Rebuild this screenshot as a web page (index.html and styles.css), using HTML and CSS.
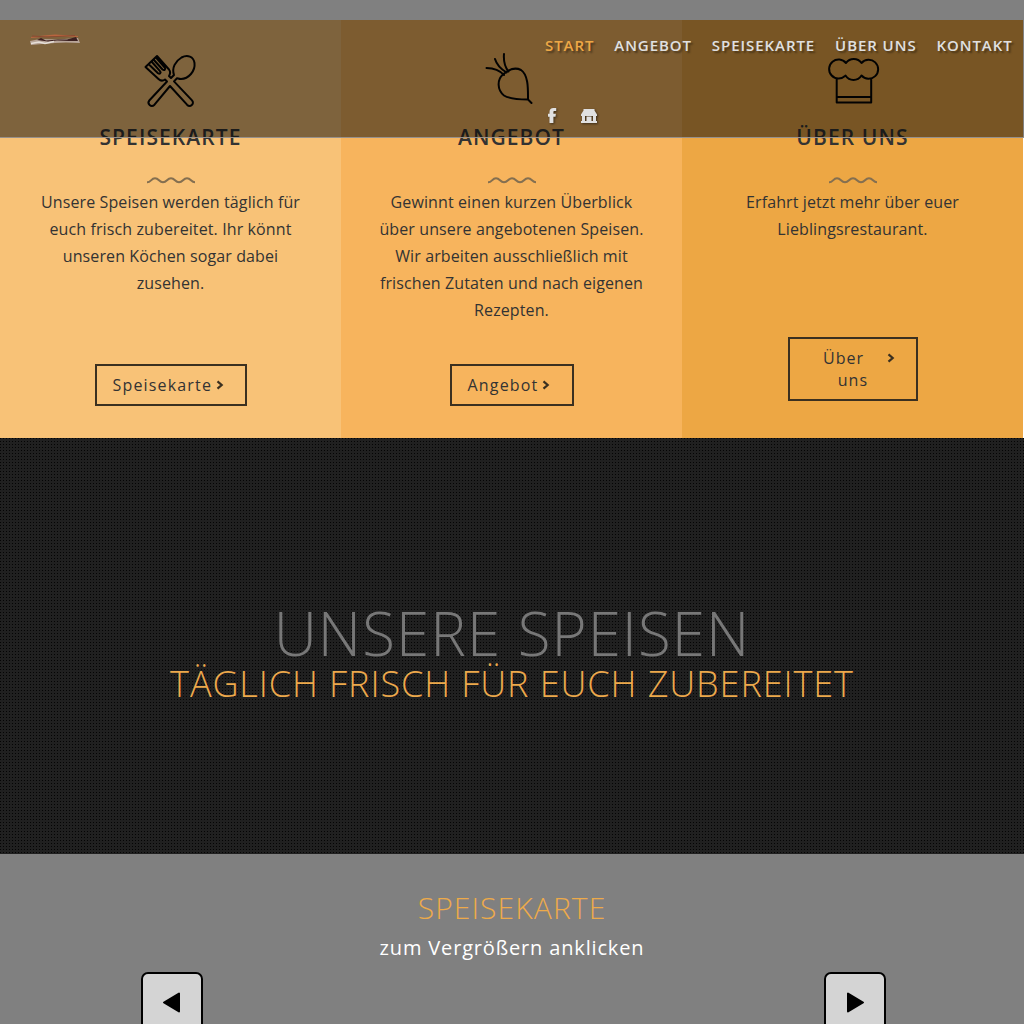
FILE: index.html
```html
<!DOCTYPE html>
<html lang="de">
<head>
<meta charset="utf-8">
<title>Restaurant</title>
<link rel="stylesheet" href="styles.css">
</head>
<body>
<header class="header">
  <a class="logo" href="#"><svg width="50" height="12" viewBox="0 0 50 12"><path d="M1 3.500 14 2.200 25 1.200 48 2.500" fill="none" stroke="#b9653f" stroke-width="1.200"/><path d="M2 2 18 3 45 1.500" fill="none" stroke="#8d4a31"/><path d="M0 7 10 5 28 5.500 48 4 50 9 36 8.500 25 9 12 10 1 11Z" fill="#b9a69a"/><path d="m7 6 4-2 5 2.500 12-1 9 0 9-2.500 2 4-9 0-12-.5-9 1Z" fill="#3c2020"/><path d="m1 9.500 8-1.500 6 1.500 9-2" fill="none" stroke="#e5dfd8" stroke-width="1.500"/></svg></a>
  <nav class="nav">
    <div class="menu"><a class="active" href="#">START</a><a href="#">ANGEBOT</a><a href="#">SPEISEKARTE</a><a href="#">ÜBER UNS</a><a href="#">KONTAKT</a></div>
    <div class="social">
      <a href="#"><svg width="16" height="16" viewBox="0 0 16 16"><path d="M4.500 15V8.700H3V5.800h1.500V4C4.500 1.300 6 0 8.300 0h2.900v3H9.600c-1 0-1.200.5-1.200 1.300v1.500h2.500l-.4 2.900H8.400V15Z"/></svg></a>
      <a href="#"><svg width="16" height="16" viewBox="0 0 16 16"><path fill-rule="evenodd" d="M2.500 1h11v1.500l2.500 4V8h-1v5h1v2H0v-2h1V8H0V6.500l2.500-4ZM4 8v5h1.500V8.500h5V13H12V8Z"/><path d="M6.500 9.500h3V13h-3Z"/></svg></a>
    </div>
  </nav>
</header>
<section class="cards">
  <article class="card light">
    <svg class="icon fork" width="54" height="54" viewBox="0 0 54 54"><path d="m2.500 12.500 11.500-11 12 13.500c1.800 2.300 1.200 4.500 0 6.500l2 2 3-3c-2.500-7 1.500-14 7.500-17.500 6-3 12-1 13 5.500 1 8-6 16-13.500 16-2 0-3-.7-4-.8l-3 3.200 18 19c3 3.400-1.800 7.500-5 4.300L27 31.500 11.500 50.200c-3.300 3.300-8-.8-5-4.500L24 27l-2-2c-2 1.500-4.500 1.400-6.500-.5Zm3-3 9.500 9.200c1.800 1.300 3.500-.5 2-2L8.500 7m2-2 9 10c1.800 1.400 3.500-.3 2.200-2l-8.700-10"/></svg>
    <h3>SPEISEKARTE</h3>
    <svg class="wave" width="48" height="7" viewBox="0 0 48 7"><path d="M0 5.300C4 5.500 4 1.300 8 1.300s4 4 8 4 4-4 8-4 4 4 8 4 4-4 8-4 4 4 8 4"/></svg>
    <p>Unsere Speisen werden täglich für<br>euch frisch zubereitet. Ihr könnt<br>unseren Köchen sogar dabei<br>zusehen.</p>
    <a class="button b1" href="#"><span>Speisekarte</span><svg width="8" height="10" viewBox="0 0 8 10"><path d="m1.500 1.300 4.200 3.700-4.200 3.700"/></svg></a>
  </article>
  <article class="card medium">
    <svg class="icon beet" width="54" height="54" viewBox="0 0 54 54"><path d="M50 46.500c-7 0-17.500 0-24-4C19 37 19 26.500 25 21.500c5.500-5 12-7.500 18-4.500C50.500 22 50 36 50 46.500l3.500 3.500M26 22C21 16.500 16 15.200 8.500 15M28.500 19.500C22 15.500 18.500 11 17 6M30.500 18.500C26 13 25.500 7 26 1"/></svg>
    <h3>ANGEBOT</h3>
    <svg class="wave" width="48" height="7" viewBox="0 0 48 7"><path d="M0 5.300C4 5.500 4 1.300 8 1.300s4 4 8 4 4-4 8-4 4 4 8 4 4-4 8-4 4 4 8 4"/></svg>
    <p>Gewinnt einen kurzen Überblick<br>über unsere angebotenen Speisen.<br>Wir arbeiten ausschließlich mit<br>frischen Zutaten und nach eigenen<br>Rezepten.</p>
    <a class="button b2" href="#"><span>Angebot</span><svg width="8" height="10" viewBox="0 0 8 10"><path d="m1.500 1.300 4.200 3.700-4.200 3.700"/></svg></a>
  </article>
  <article class="card deep">
    <svg class="icon" width="54" height="54" viewBox="0 0 54 54"><path d="M10.700 26V49.500h34.500V26M10.700 44h34.500M19 23a9.500 9.500 0 1 1 1-13 9.500 9.500 0 0 1 15.500 0 9.500 9.500 0 1 1 0 12.500 9.500 9.500 0 0 1-16 0"/></svg>
    <h3>ÜBER UNS</h3>
    <svg class="wave" width="48" height="7" viewBox="0 0 48 7"><path d="M0 5.300C4 5.500 4 1.300 8 1.300s4 4 8 4 4-4 8-4 4 4 8 4 4-4 8-4 4 4 8 4"/></svg>
    <p>Erfahrt jetzt mehr über euer<br>Lieblingsrestaurant.</p>
    <a class="button b3" href="#"><span class="two-line">Über <br>uns</span><svg width="8" height="10" viewBox="0 0 8 10"><path d="m1.500 1.300 4.200 3.700-4.200 3.700"/></svg></a>
  </article>
</section>
<section class="hero">
  <h1>UNSERE SPEISEN</h1>
  <h2>TÄGLICH FRISCH FÜR EUCH ZUBEREITET</h2>
</section>
<section class="gallery">
  <h2>SPEISEKARTE</h2>
  <p>zum Vergrößern anklicken</p>
  <div class="controls">
    <button aria-label="Zurück"><svg width="20" height="22" viewBox="0 0 20 22"><path d="M2 10.500 17 1.500v18Z"/></svg></button>
    <button aria-label="Weiter"><svg width="20" height="22" viewBox="0 0 20 22"><path d="M18 10.500 3 1.500v18Z"/></svg></button>
  </div>
</section>
</body>
</html>
```
FILE: styles.css
```css
* { box-sizing: border-box; }
html { overflow: hidden; }
body { margin: 0; padding-top: 20px; height: 1024px; overflow: hidden; background: #808080; color: #333; font-family: "Open Sans", sans-serif; }
h1, h2, h3, p { margin: 0; white-space: nowrap; }
a { color: inherit; text-decoration: none; }
svg { display: block; flex: none; }
.header { position: absolute; z-index: 2; top: 20px; left: 0; width: 1024px; height: 118px; display: flex; justify-content: space-between; background: rgba(4,4,4,.5); border-bottom: 1px solid #98908a; }
.logo { padding: 14px 0 0 30px; }
.nav { width: 479px; padding-top: 13px; color: #e0e0e0; }
.menu { display: flex; gap: 19.900px; font-size: 15px; line-height: 24px; font-weight: 600; letter-spacing: .94px; white-space: nowrap; text-shadow: 2px 2px 2px rgba(0,0,0,.4); }
.menu .active { color: #eea846; }
.social { display: flex; gap: 20px; padding-top: 51px; }
.social svg { fill: #e0e0e0; filter: drop-shadow(1px 1px 1px rgba(0,0,0,.5)); }
.cards { height: 418px; display: grid; grid-template-columns: repeat(3, 341px); background: #fff; }
.card { display: flex; flex-direction: column; align-items: center; padding-top: 33px; }
.light { background: #f8c277; }
.medium { background: #f7b45d; }
.deep { background: #eda744; }
.icon { fill: none; stroke: #000; stroke-width: 2; stroke-linejoin: round; stroke-linecap: round; overflow: visible; }
.fork { transform: translate(-1px, 1.500px); }
.beet { transform: translate(-7px, 0); }
.card h3 { height: 30px; margin-top: 15px; font-size: 21px; line-height: 30px; font-weight: 600; letter-spacing: 1.080px; }
.wave { margin-top: 25px; fill: none; stroke: #846f50; stroke-width: 2; }
.card p { height: 135px; margin-top: 5px; font-size: 16px; line-height: 27px; letter-spacing: .110px; text-align: center; }
.button { height: 42px; margin-top: 40px; padding-left: 16px; display: flex; align-items: center; gap: 4px; border: 2px solid #3b3020; font-size: 16px; line-height: 22px; letter-spacing: 1.170px; }
.button svg { fill: none; stroke: #3b3020; stroke-width: 2.200; }
.b1 { width: 152px; }
.b2 { width: 124px; }
.b3 { width: 130px; height: 64px; margin: 13px 0 0 1px; padding: 8px 21px 0 33px; align-items: flex-start; justify-content: space-between; }
.b3 svg { margin-top: 6px; }
.two-line { width: 45px; text-align: right; white-space: pre-wrap; letter-spacing: 1px; margin-right: -3px; }
.hero { height: 416px; padding-top: 152px; text-align: center; background: conic-gradient(from 0deg at 1px 1px, #202020 270deg, #040404 0) 0 0 / 3px 3px; }
.hero h1 { height: 72px; color: #777; font-size: 60px; line-height: 87px; font-weight: 300; letter-spacing: 1.060px; }
.hero h2 { color: #eda94c; font-size: 36px; line-height: 44px; font-weight: 300; letter-spacing: .920px; }
.gallery { padding-top: 34px; text-align: center; }
.gallery h2 { color: #edaa4a; font-size: 30px; line-height: 40px; font-weight: 300; letter-spacing: 1.100px; }
.gallery p { color: #fff; font-size: 20px; line-height: 28px; margin-top: 6px; letter-spacing: .840px; }
.controls { display: flex; justify-content: space-between; padding: 10px 138px 0 141px; }
.controls button { width: 62px; height: 62px; padding: 0; border: 2px solid #000; border-radius: 7px; background: #d4d4d4; display: grid; place-items: center; }
.controls path { stroke: #000; stroke-width: 2; stroke-linejoin: round; }
```
